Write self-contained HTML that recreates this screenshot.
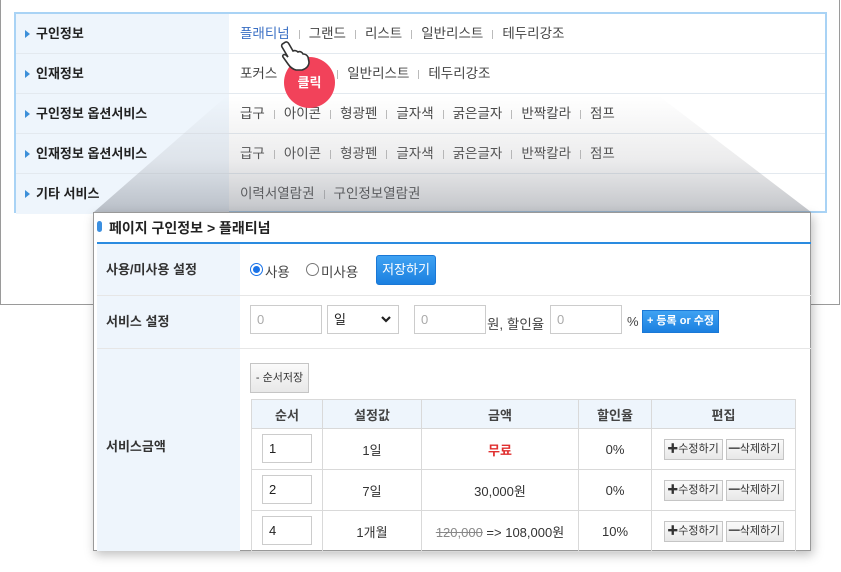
<!DOCTYPE html>
<html><head><meta charset="utf-8"><style>
*{box-sizing:border-box;margin:0;padding:0}
body{width:841px;height:572px;background:#fff;position:relative;overflow:hidden;font-family:"Liberation Sans","Noto Sans CJK KR",sans-serif;font-size:13px;color:#333}
.a{position:absolute}
.frame{left:0;top:0;width:840px;height:305px;border:1px solid #9a9a9a;border-top:none}
.box{left:14px;top:12px;width:813px;height:201px;border:2px solid #a9d3f5;background:#fff}
.row{position:absolute;left:0;width:809px;height:40px;border-bottom:1px solid #e3e9ef}
.row .l{position:absolute;left:0;top:0;width:213px;height:100%;background:#eef5fc;font-weight:bold;color:#222;padding-left:20px;line-height:40px}
.row .l:before{content:"";position:absolute;left:9px;top:16px;border-left:5px solid #3b8fd9;border-top:4px solid transparent;border-bottom:4px solid transparent}
.row .r{position:absolute;left:224px;top:0;line-height:40px;color:#444;white-space:nowrap;font-size:13.5px}
.sep{display:inline-block;width:1px;height:9px;background:#bbb;margin:0 9px;vertical-align:-1px}
.pop{left:93px;top:212px;width:718px;height:339px;background:#fff;border:1px solid #999;box-shadow:2px 4px 10px rgba(0,0,0,.25)}
.lab{position:absolute;left:3px;width:143px;background:#eef5fc;font-weight:bold;color:#333;padding-left:9px}
.in{position:absolute;height:29px;border:1px solid #ccc;background:#fff;color:#aaa;padding-left:6px;line-height:27px;text-align:left}
.btn{position:absolute;height:21px;border:1px solid #c5c5c5;background:linear-gradient(#fafafa,#e8e8e8);font-size:11px;color:#333;line-height:19px;text-align:center}
table{position:absolute;left:157px;top:186px;border-collapse:collapse;width:545px}
td,th{border:1px solid #d9d9d9;text-align:center;font-weight:normal;color:#333}
th{height:29px;background:#eef5fc;font-weight:bold;color:#444}
td{height:41px;position:relative}
</style></head><body>
<div class="a frame"></div>
<div class="a box">
 <div class="row" style="top:0"><div class="l">구인정보</div><div class="r"><span style="color:#3a6fc4">플래티넘</span><span class="sep"></span>그랜드<span class="sep"></span>리스트<span class="sep"></span>일반리스트<span class="sep"></span>테두리강조</div></div>
 <div class="row" style="top:40px"><div class="l">인재정보</div><div class="r">포커스<span class="sep" style="margin-left:60px"></span>일반리스트<span class="sep"></span>테두리강조</div></div>
 <div class="row" style="top:80px"><div class="l">구인정보 옵션서비스</div><div class="r">급구<span class="sep"></span>아이콘<span class="sep"></span>형광펜<span class="sep"></span>글자색<span class="sep"></span>굵은글자<span class="sep"></span>반짝칼라<span class="sep"></span>점프</div></div>
 <div class="row" style="top:120px"><div class="l">인재정보 옵션서비스</div><div class="r">급구<span class="sep"></span>아이콘<span class="sep"></span>형광펜<span class="sep"></span>글자색<span class="sep"></span>굵은글자<span class="sep"></span>반짝칼라<span class="sep"></span>점프</div></div>
 <div class="row" style="top:160px;border:none"><div class="l">기타 서비스</div><div class="r">이력서열람권<span class="sep"></span>구인정보열람권</div></div>
</div>
<div class="a" style="left:0;top:0;width:841px;height:213px;clip-path:polygon(230px 93px,655px 93px,811px 212px,94px 212px);background:linear-gradient(rgba(160,160,165,0) 45%,rgba(160,160,165,.2) 75%,rgba(120,125,135,.45) 100%)"></div>
<div class="a" style="left:284px;top:57px;width:51px;height:51px;border-radius:50%;background:#f2425a;color:#fff;font-weight:bold;font-size:13px;text-align:center;line-height:51px">클릭</div>
<svg class="a" style="left:278px;top:40px" width="34" height="32" viewBox="0 0 34 32"><path d="M6 3 C8 1 10 2 11 4 L15 11 C17 10 19 11 20 12 C22 11 24 12 25 14 C27 14 29 15 30 17 L31 22 C31 26 28 29 24 30 L18 30 C14 29 12 27 10 24 L5 17 C4 15 6 14 8 15 L10 17 L4 7 C3 5 4 4 6 3 Z" fill="#fff" stroke="#333" stroke-width="1.6"/></svg>
<div class="a pop">
 <div class="a" style="left:3px;top:8px;width:5px;height:11px;border-radius:3px;background:#3b8fe0"></div>
 <div class="a" style="left:15px;top:5px;font-weight:bold;color:#222;font-size:14px">페이지 구인정보 &gt; 플래티넘</div>
 <div class="a" style="left:3px;top:29px;width:714px;height:2px;background:#2a8be0"></div>
 <div class="lab" style="top:31px;height:51px;line-height:51px">사용/미사용 설정</div>
 <div class="a" style="left:3px;top:82px;width:714px;height:1px;background:#e6e6e6"></div>
 <div class="lab" style="top:83px;height:52px;line-height:52px">서비스 설정</div>
 <div class="a" style="left:3px;top:135px;width:714px;height:1px;background:#e6e6e6"></div>
 <div class="lab" style="top:136px;height:202px;line-height:196px">서비스금액</div>
 <div class="a" style="left:156px;top:50px;width:13px;height:13px;border:1px solid #1a73e8;border-radius:50%;background:#fff"><div style="margin:2px;width:7px;height:7px;border-radius:50%;background:#1a73e8"></div></div>
 <div class="a" style="left:171px;top:48px;color:#444;font-size:13.5px">사용</div>
 <div class="a" style="left:212px;top:50px;width:13px;height:13px;border:1px solid #777;border-radius:50%"></div>
 <div class="a" style="left:227px;top:48px;color:#444;font-size:13.5px">미사용</div>
 <div class="a" style="left:282px;top:42px;width:60px;height:30px;border-radius:3px;background:linear-gradient(#3fa2f2,#1b80e0);border:1px solid #1a78d6;color:#fff;text-align:center;line-height:28px">저장하기</div>
 <div class="in" style="left:156px;top:92px;width:72px">0</div>
 <div class="in" style="left:233px;top:92px;width:72px;color:#222">일<svg style="position:absolute;right:7px;top:10px" width="10" height="7" viewBox="0 0 10 7"><path d="M1 1 L5 5 L9 1" fill="none" stroke="#222" stroke-width="2.2"/></svg></div>
 <div class="in" style="left:320px;top:92px;width:72px">0</div>
 <div class="a" style="left:393px;top:100px;color:#444;font-size:13.5px">원, 할인율</div>
 <div class="in" style="left:456px;top:92px;width:72px">0</div>
 <div class="a" style="left:533px;top:101px;color:#444">%</div>
 <div class="a" style="left:548px;top:97px;width:77px;height:23px;background:linear-gradient(#3fa2f2,#1b80e0);border:1px solid #1a78d6;color:#fff;font-weight:bold;font-size:11px;text-align:center;line-height:21px">+ 등록 or 수정</div>
 <div class="btn" style="left:156px;top:150px;width:59px;height:30px;line-height:28px;font-size:11px">- 순서저장</div>
 <table>
  <tr><th style="width:71px">순서</th><th style="width:99px">설정값</th><th style="width:157px">금액</th><th style="width:73px">할인율</th><th>편집</th></tr>
  <tr><td><div class="in" style="left:10px;top:5px;width:50px;color:#222">1</div></td><td>1일</td><td style="color:#e03030;font-weight:bold">무료</td><td>0%</td><td><span class="btn" style="position:relative;display:inline-block;width:59px;margin-right:3px">✚수정하기</span><span class="btn" style="position:relative;display:inline-block;width:58px">━삭제하기</span></td></tr>
  <tr><td><div class="in" style="left:10px;top:5px;width:50px;color:#222">2</div></td><td>7일</td><td>30,000원</td><td>0%</td><td><span class="btn" style="position:relative;display:inline-block;width:59px;margin-right:3px">✚수정하기</span><span class="btn" style="position:relative;display:inline-block;width:58px">━삭제하기</span></td></tr>
  <tr><td><div class="in" style="left:10px;top:5px;width:50px;color:#222">4</div></td><td>1개월</td><td><s style="color:#888">120,000</s> =&gt; 108,000원</td><td>10%</td><td><span class="btn" style="position:relative;display:inline-block;width:59px;margin-right:3px">✚수정하기</span><span class="btn" style="position:relative;display:inline-block;width:58px">━삭제하기</span></td></tr>
 </table>
</div>
</body></html>
